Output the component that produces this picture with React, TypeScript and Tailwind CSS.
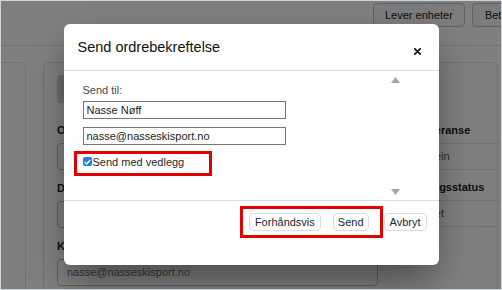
import React from "react";

const FONT = { fontFamily: '"Liberation Sans", Arial, sans-serif' };

const LEFT_FIELDS = [
  { label: "Ordrenummer", value: "" },
  { label: "Dato", value: "" },
  { label: "Kontakt e-post", value: "nasse@nasseskisport.no" },
];

const RIGHT_ROWS = [
  { label: "Vår referanse", value: "Mari Stein" },
  { label: "Leveringsstatus", value: "Bekreftet" },
];

function CloseIcon() {
  return (
    <svg width="7" height="7" viewBox="0 0 7 7" className="mt-[9px] shrink-0">
      <path d="M0.8 0.8 L6.2 6.2 M6.2 0.8 L0.8 6.2" stroke="#1f1f1f" strokeWidth="1.9" strokeLinecap="round" />
    </svg>
  );
}

function Arrow({ down }: { down?: boolean }) {
  return (
    <svg width="9" height="6" viewBox="0 0 9 6">
      <polygon points={down ? "0,0 9,0 4.5,6" : "4.5,0 9,6 0,6"} fill="#a3a3a3" />
    </svg>
  );
}

function PageBehind() {
  return (
    <div className="flex h-full flex-col">
      <div className="flex h-[45px] shrink-0 items-start gap-[7px] border-b border-[#e4e4e4] pl-[372px] pt-[2px]">
        <button className="h-[24px] shrink-0 rounded-[4px] border border-[#c4c4c4] bg-[#f8f8f8] px-[11px] text-[11px] text-[#222]">
          Lever enheter
        </button>
        <button className="h-[24px] shrink-0 rounded-[4px] border border-[#c4c4c4] bg-[#f8f8f8] px-[12px] text-[11px] text-[#222]">
          Betaling
        </button>
      </div>
      <div className="flex flex-1 gap-[17px] pt-[16px]">
        <div className="w-[25px] shrink-0 rounded-tr-[6px] border-r border-t border-[#e2e2e2]" />
        <div className="mr-[3px] flex flex-1 gap-[8px] rounded-t-[6px] border-l border-r border-t border-[#e2e2e2] pl-[13px] pt-[12px]">
          <div className="w-[321px] shrink-0">
            <div className="mb-[21px] h-[28px] w-[120px] rounded-[4px] bg-[#d6d6d6]" />
            {LEFT_FIELDS.map((f) => (
              <div key={f.label}>
                <div className="mb-[6px] text-[11px] font-bold leading-[13px] text-[#222]">{f.label}</div>
                <div className="mb-[12px] flex h-[27px] items-center rounded-[4px] border border-[#bdbdbd] px-[9px] text-[11px] text-[#707070]">
                  {f.value}
                </div>
              </div>
            ))}
          </div>
          <div className="flex-1 pt-[38px]">
            {RIGHT_ROWS.map((r) => (
              <div key={r.label}>
                <div className="border-b border-[#e0e0e0] pb-[6px] pl-[14px] pt-[11px] text-[11px] font-bold leading-[13px] text-[#222]">
                  {r.label}
                </div>
                <div className="border-b border-[#e0e0e0] py-[6px] pl-[14px] text-[11px] leading-[13px] text-[#555]">
                  {r.value}
                </div>
              </div>
            ))}
          </div>
        </div>
      </div>
    </div>
  );
}

export default function App() {
  return (
    <div
      className="relative h-[290px] w-[502px] overflow-hidden border border-[#cfd4d9] bg-white"
      style={FONT}
    >
      <PageBehind />

      <div className="absolute inset-0 flex justify-center bg-black/50 pt-[23px]">
        <div className="h-fit w-[375px] rounded-[6px] bg-white shadow-[0_18px_36px_-6px_rgba(0,0,0,0.45)]">
          <div className="flex items-start justify-between border-b border-[#dedede] pb-[14px] pl-[14px] pr-[18px] pt-[15px]">
            <h2 className="text-[14.5px] font-normal leading-[17px] text-[#111]">Send ordrebekreftelse</h2>
            <CloseIcon />
          </div>

          <div className="flex h-[129px]">
            <div className="flex-1 pl-[19px] pt-[13px]">
              <div className="mb-[4px] text-[11px] leading-[13px] text-[#4a4a4a]">Send til:</div>
              <input
                readOnly
                value="Nasse Nøff"
                className="block h-[18px] w-[203px] border border-[#767676] px-[3px] text-[11px] text-[#222] outline-none"
              />
              <input
                readOnly
                value="nasse@nasseskisport.no"
                className="mt-[8px] block h-[18px] w-[203px] border border-[#767676] px-[3px] text-[11px] text-[#222] outline-none"
              />
              <label className="relative mt-[11px] inline-flex items-start text-[11px] leading-[13px] text-[#2a2a2a]">
                <span className="mt-[1px] flex h-[9px] w-[9px] items-center justify-center rounded-[2px] bg-[#2a7de1]">
                  <svg width="7" height="6" viewBox="0 0 7 6">
                    <path d="M0.8 3.1 L2.7 4.9 L6.2 1" stroke="white" strokeWidth="1.4" fill="none" />
                  </svg>
                </span>
                <span className="ml-[1px]">Send med vedlegg</span>
                <span className="pointer-events-none absolute -bottom-[7px] -left-[9px] -right-[28px] -top-[5px] border-[3px] border-[#e00000]" />
              </label>
            </div>
            <div className="mr-[37px] flex w-[13px] flex-col items-center justify-between pb-[5px] pt-[6px]">
              <Arrow />
              <Arrow down />
            </div>
          </div>

          <div className="flex items-start justify-end border-t border-[#dedede] pb-[34px] pr-[12px] pt-[12px]">
            <div className="relative flex gap-[12px]">
              <button className="h-[18px] rounded-[4px] border border-[#d6dce2] bg-white px-[5px] text-[11px] leading-none text-[#232833]">
                Forhåndsvis
              </button>
              <button className="h-[18px] rounded-[4px] border border-[#d6dce2] bg-white px-[4px] text-[11px] leading-none text-[#232833]">
                Send
              </button>
              <span className="pointer-events-none absolute -bottom-[7px] -left-[9px] -right-[14px] -top-[7px] border-[3px] border-[#e00000]" />
            </div>
            <button className="ml-[15px] h-[18px] rounded-[4px] border border-[#d6dce2] bg-white px-[5px] text-[11px] leading-none text-[#232833]">
              Avbryt
            </button>
          </div>
        </div>
      </div>
    </div>
  );
}
